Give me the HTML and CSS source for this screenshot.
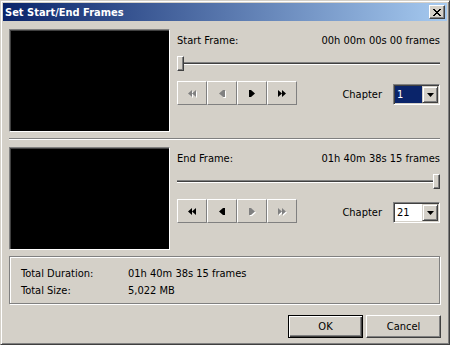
FILE: index.html
```html
<!DOCTYPE html>
<html lang="en">
<head>
  <meta charset="UTF-8">
  <title>Set Start/End Frames</title>
  <link rel="stylesheet" href="styles.css">
</head>
<body>
  <div class="window">
    <div class="titlebar">
      <span class="title">Set Start/End Frames</span>
      <span class="close-btn">
        <svg width="8" height="7" viewBox="0 0 8 7"><path d="M0 0h2v1H0zM6 0h2v1H6zM1 1h2v1H1zM5 1h2v1H5zM2 2h4v1H2zM3 3h2v1H3zM2 4h4v1H2zM1 5h2v1H1zM5 5h2v1H5zM0 6h2v1H0zM6 6h2v1H6z" fill="#000"/></svg>
      </span>
    </div>

    <div class="client">
      <div class="section">
        <div class="video"></div>
        <div class="controls">
          <div class="frame-row"><span>Start Frame:</span><span>00h 00m 00s 00 frames</span></div>
          <div class="slider"><div class="track"></div><div class="thumb"></div></div>
          <div class="transport-row">
            <div class="toolbar">
              <span class="tool-btn disabled"><svg width="8" height="7" viewBox="0 0 8 7"><path d="M4 0v7L0 3.5zM8 0v7L4 3.5z"/></svg></span>
              <span class="tool-btn disabled"><svg width="6" height="7" viewBox="0 0 6 7"><path d="M4 0v7L0 3.5zM4 0h2v7H4z"/></svg></span>
              <span class="tool-btn"><svg width="6" height="7" viewBox="0 0 6 7"><path d="M0 0h2v7H0zM2 0v7l4-3.5z"/></svg></span>
              <span class="tool-btn"><svg width="8" height="7" viewBox="0 0 8 7"><path d="M0 0v7l4-3.5zM4 0v7l4-3.5z"/></svg></span>
            </div>
            <div class="chapter">
              <span>Chapter</span>
              <div class="combo">
                <span class="combo-field selected">1</span>
                <span class="combo-btn"><svg width="7" height="4" viewBox="0 0 7 4"><path d="M0 0h7L3.5 4z"/></svg></span>
              </div>
            </div>
          </div>
        </div>
      </div>

      <div class="separator"></div>

      <div class="section second">
        <div class="video"></div>
        <div class="controls">
          <div class="frame-row"><span>End Frame:</span><span>01h 40m 38s 15 frames</span></div>
          <div class="slider"><div class="track"></div><div class="thumb at-end"></div></div>
          <div class="transport-row">
            <div class="toolbar">
              <span class="tool-btn"><svg width="8" height="7" viewBox="0 0 8 7"><path d="M4 0v7L0 3.5zM8 0v7L4 3.5z"/></svg></span>
              <span class="tool-btn"><svg width="6" height="7" viewBox="0 0 6 7"><path d="M4 0v7L0 3.5zM4 0h2v7H4z"/></svg></span>
              <span class="tool-btn disabled"><svg width="6" height="7" viewBox="0 0 6 7"><path d="M0 0h2v7H0zM2 0v7l4-3.5z"/></svg></span>
              <span class="tool-btn disabled"><svg width="8" height="7" viewBox="0 0 8 7"><path d="M0 0v7l4-3.5zM4 0v7l4-3.5z"/></svg></span>
            </div>
            <div class="chapter">
              <span>Chapter</span>
              <div class="combo">
                <span class="combo-field">21</span>
                <span class="combo-btn"><svg width="7" height="4" viewBox="0 0 7 4"><path d="M0 0h7L3.5 4z"/></svg></span>
              </div>
            </div>
          </div>
        </div>
      </div>

      <div class="summary">
        <div class="summary-row"><span class="summary-label">Total Duration:</span><span>01h 40m 38s 15 frames</span></div>
        <div class="summary-row"><span class="summary-label">Total Size:</span><span>5,022 MB</span></div>
      </div>

      <div class="actions">
        <button class="default">OK</button>
        <button>Cancel</button>
      </div>
    </div>
  </div>
</body>
</html>
```

FILE: styles.css
```css
body {
  margin: 0;
  font-family: "DejaVu Sans Condensed", "DejaVu Sans", sans-serif;
  font-size: 11px;
  color: #000;
  background: #d4d0c8;
}

.window {
  width: 450px;
  height: 345px;
  box-sizing: border-box;
  background: #d4d0c8;
  border: 1px solid;
  border-color: #d4d0c8 #404040 #404040 #d4d0c8;
  box-shadow: inset 1px 1px #fff, inset -1px -1px #808080;
  padding: 2px;
  display: flex;
  flex-direction: column;
}

.titlebar {
  height: 18px;
  display: flex;
  align-items: center;
  justify-content: space-between;
  padding: 0 2px;
  background: linear-gradient(to right, #0a246a, #a6caf0);
}

.title {
  color: #fff;
  font-weight: bold;
}

.close-btn {
  width: 16px;
  height: 14px;
  box-sizing: border-box;
  background: #d4d0c8;
  border: 1px solid;
  border-color: #fff #404040 #404040 #fff;
  box-shadow: inset -1px -1px #808080;
  display: flex;
  align-items: center;
  justify-content: center;
}

.client {
  flex: 1;
  padding: 8px 7px 0 6px;
}

.section {
  display: flex;
  height: 103px;
}

.section.second {
  margin-top: 7px;
}

.video {
  width: 161px;
  height: 103px;
  box-sizing: border-box;
  background: #000;
  border: 1px solid;
  border-color: #808080 #fff #fff #808080;
  box-shadow: inset 1px 1px #404040;
}

.controls {
  flex: 1;
  margin-left: 7px;
  display: flex;
  flex-direction: column;
}

.frame-row {
  display: flex;
  justify-content: space-between;
  margin-top: 5px;
  line-height: 13px;
}

.slider {
  position: relative;
  height: 15px;
  margin-top: 9px;
  display: flex;
  align-items: center;
}

.track {
  flex: 1;
  height: 3px;
  box-sizing: border-box;
  border-top: 1px solid #808080;
  border-bottom: 1px solid #fff;
  background: #404040;
}

.thumb {
  position: absolute;
  top: 0;
  left: 0;
  width: 7px;
  height: 15px;
  box-sizing: border-box;
  background: #d4d0c8;
  border: 1px solid;
  border-color: #fff #404040 #404040 #fff;
  box-shadow: inset -1px -1px #808080;
}

.thumb.at-end {
  left: auto;
  right: 0;
}

.transport-row {
  margin-top: 10px;
  display: flex;
  justify-content: space-between;
  align-items: flex-end;
}

.toolbar {
  display: flex;
}

.tool-btn {
  width: 30px;
  height: 24px;
  box-sizing: border-box;
  border: 1px solid;
  border-color: #fff #808080 #808080 #fff;
  display: flex;
  align-items: center;
  justify-content: center;
}

.tool-btn svg {
  fill: #000;
}

.tool-btn.disabled svg {
  fill: #808080;
  filter: drop-shadow(1px 1px 0 #fff);
}

.chapter {
  display: flex;
  align-items: center;
  gap: 11px;
}

.combo {
  width: 47px;
  height: 21px;
  box-sizing: border-box;
  border: 1px solid;
  border-color: #808080 #fff #fff #808080;
  box-shadow: inset 1px 1px #404040, inset -1px -1px #d4d0c8;
  padding: 1px;
  display: flex;
}

.combo-field {
  flex: 1;
  background: #fff;
  padding-left: 2px;
  line-height: 17px;
}

.combo-field.selected {
  background: #0a246a;
  color: #fff;
}

.combo-btn {
  width: 16px;
  height: 17px;
  box-sizing: border-box;
  background: #d4d0c8;
  border: 1px solid;
  border-color: #d4d0c8 #404040 #404040 #d4d0c8;
  box-shadow: inset 1px 1px #fff, inset -1px -1px #808080;
  display: flex;
  align-items: center;
  justify-content: center;
}

.separator {
  margin-top: 6px;
  height: 0;
  border-top: 1px solid #808080;
  border-bottom: 1px solid #fff;
}

.summary {
  margin-top: 6px;
  height: 48px;
  box-sizing: border-box;
  border: 1px solid #808080;
  box-shadow: inset 1px 1px #fff, 1px 1px #fff;
  padding: 8px 0 0 11px;
}

.summary-row {
  display: flex;
  line-height: 17px;
}

.summary-label {
  width: 107px;
}

.actions {
  margin-top: 11px;
  margin-right: -1px;
  display: flex;
  justify-content: flex-end;
  gap: 3px;
}

button {
  width: 75px;
  height: 23px;
  padding: 0;
  font: inherit;
  color: #000;
  background: #d4d0c8;
  border: 1px solid;
  border-color: #fff #404040 #404040 #fff;
  box-shadow: inset -1px -1px #808080;
}

button.default {
  border-color: #000;
  box-shadow: inset 1px 1px #fff, inset -1px -1px #404040, inset -2px -2px #808080;
}
```
